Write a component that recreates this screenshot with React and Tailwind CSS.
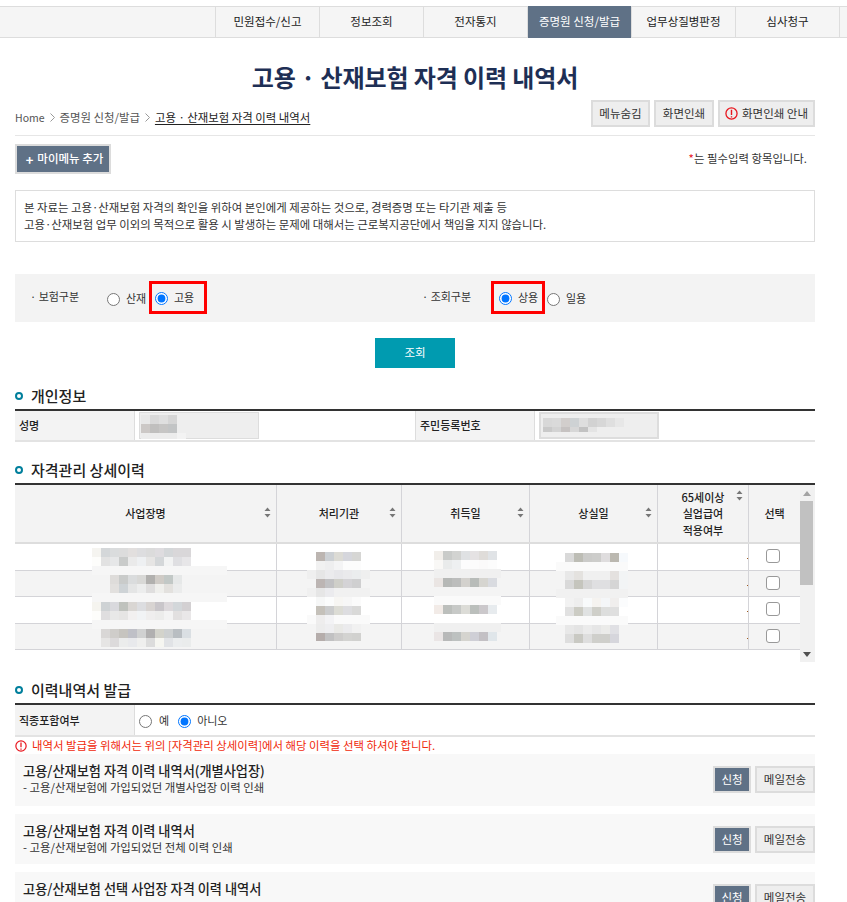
import React from "react";

const FONT = "[font-family:'Noto_Sans_CJK_KR','Noto_Sans',sans-serif]";
const nav = ["민원접수/신고", "정보조회", "전자통지", "증명원 신청/발급", "업무상질병판정", "심사청구"];

const Sort = () => (
  <svg width="7" height="11" viewBox="0 0 7 11" className="block">
    <path d="M3.5 0.5 L6.5 4 H0.5 Z M3.5 10.5 L0.5 7 H6.5 Z" fill="#777" />
  </svg>
);

const Radio = ({ checked, name }) => (
  <input type="radio" name={name} defaultChecked={checked} className="m-0 h-[13px] w-[13px] shrink-0 translate-y-px accent-[#0075ff]" />
);

const Bullet = ({ children, className }) => (
  <h2 className={`flex h-[14px] items-center gap-2 text-[15px] font-medium text-[#222] ${className}`}>
    <span className="h-2 w-2 rounded-full border-2 border-[#007f9c]" />
    {children}
  </h2>
);

const Warn = ({ size = 13 }) => (
  <svg width={size} height={size} viewBox="0 0 14 14" className="shrink-0">
    <circle cx="7" cy="7" r="6" fill="none" stroke="#e8171f" strokeWidth="1.4" />
    <path d="M7 3 V8.5 M7 10 V11.3" stroke="#e8171f" strokeWidth="1.5" />
  </svg>
);

const GrayBtn = ({ className, children }) => (
  <button className={`flex h-[27px] items-center justify-center gap-1 border-2 border-[#dcdcdc] bg-[#eeeeee] text-[11.5px] whitespace-nowrap text-[#333] ${className}`}>
    {children}
  </button>
);

const SlateBtn = ({ className, children }) => (
  <button className={`flex items-center justify-center border-2 border-[#dcdcdc] bg-[#5f7186] text-[11.5px] whitespace-nowrap text-white ${className}`}>
    {children}
  </button>
);

const heads = [
  ["사업장명", "w-[262px]"],
  ["처리기관", "w-[125px]"],
  ["취득일", "w-[128px]"],
  ["상실일", "w-[128px]"],
];

const rows = [
  "h-[27px] bg-white",
  "h-[26px] bg-[#f4f4f4]",
  "h-[27px] bg-white",
  "h-[26px] bg-[#f4f4f4]",
];

const M = (x, y, h, colors, w = 9) => ({ x, y, h, w, colors });
const c1 = "#d4d7d9", c2 = "#e2e2e2", c3 = "#c9cbca", c6 = "#f6f6f6";
const blurs = [
  M(92, 63, 9, ["#f5f4f0", c1, "#dadcdd", "#dcdcdc", "#e2dfde", "#dddddf", "#dbdbdb", "#dedcdf", c1, "#d9d7d9", "#d9d7d9"]),
  M(92, 72, 9, ["#fdfdfb", c2, "#e6e7e8", c3, "#eaeaea", "#eef0f2", "#e6e5e4", c1, "#f2f3f3", "#dfdfe2", "#e7e6e8"]),
  M(92, 81, 9, [c6, c6, c6, c6, c6, c6, c6, c6, c6, c6, c6, c6, c6, c6, c6]),
  M(110, 90, 9, ["#dedcda", c3, "#dadcdd", "#d8d8d6", "#b1b0ae", "#cfcbc6", "#c2c8c6", "#e6e8e8"]),
  M(110, 99, 9, ["#e2e0de", "#ced3d6", "#e4e5e5", "#eceded", "#dfdede", "#efefec", "#e3e1de", "#ebecec"]),
  M(92, 108, 9, [c6, c6, c6, c6, c6, c6, c6, c6, c6, c6, c6, c6, c6, c6, c6]),
  M(92, 117, 9, ["#f5f4ef", "#ced2d4", "#d9d9dd", "#bfc2bd", "#d9d6d3", "#dcdde0", "#d8d4d2", "#c9c6ca", "#ddd9dc", "#d3d7da", "#d3d0d2"]),
  M(92, 126, 9, ["#fdfdfb", "#dfdedf", "#e8e8e8", "#e6e5e4", "#f2f0f0", "#f1f3f5", "#efeeee", "#ececeb", "#f3f3f3", "#e2e0e0", "#e9e7e8"]),
  M(92, 135, 9, [c6, c6, c6, c6, c6, c6, c6, c6, c6, c6, c6, c6, c6, c6, c6]),
  M(101, 144, 9, ["#d9d7d6", "#cfcdca", "#c6c4bf", "#bfc0c7", "#d0d1d1", "#b1b0b0", "#d3d3cb", "#cdd0d1", "#b9bec2", "#dadfe3"]),
  M(101, 153, 9, ["#e6e5e4", "#dcdadb", "#ebecec", "#e8e9ec", "#efefee", "#dcdcdc", "#f6f6f1", "#e1e3e6", "#ebedee", "#eaecec"]),

  M(316, 67, 9, ["#bcb5b1", "#ccd0d4", "#dcdbd5", "#d5d6dc", "#d6d6d4"]),
  M(316, 76, 9, ["#f1f1f1", "#eeeeef", "#f4f4f5", "#fcfcfc", "#fcfcfc"]),
  M(307, 85, 9, ["#efefef", "#e6e6e6", "#ebebed", "#e7e7ea", "#eaeaec", "#ebedee", "#efefef"]),
  M(316, 94, 9, ["#bcb5b3", "#c1c1c3", "#cfcfc9", "#d4d3d6", "#cfcfd0"]),
  M(307, 103, 9, ["#f0f0f0", "#e6e6e6", "#ebebee", "#f1f1f1", "#f1f1f1", "#f1f1f1", "#f1f1f1"]),
  M(316, 112, 9, ["#f6f7f7", "#fbfcfc", "#f7f6f3", "#f7f7f7", "#fbfbfb"]),
  M(316, 121, 9, ["#c5c1ba", "#cbcccd", "#dcdcd5", "#dddde0", "#d9d9d8"]),
  M(307, 130, 9, ["#fafafa", "#eeeded", "#f3f3f5", "#fafafa", "#fafafa", "#fafafa", "#fafafa"]),
  M(316, 139, 9, ["#ececec", "#eeeef0", "#e9e9e6", "#ebebed", "#f1f1f1"]),
  M(316, 148, 8, ["#b5adab", "#c1c1c2", "#cdcccb", "#d3d3d1", "#d1d1cf"]),

  M(434, 66, 9, ["#f1eeea", "#c9cbc9", "#d2d3d1", "#dfe1e3", "#e5e2e3", "#dfdcd9", "#e0e3e6"]),
  M(434, 75, 9, ["#f9f8f6", "#e9ebeb", "#eef0f1", "#fcfcfd", "#fcfcfc", "#fbfafa", "#fcfcfc"]),
  M(434, 84, 9, ["#f0f0f0", "#f0f0f0", "#f0f0f0", "#f0f0f0", "#f0f0f0", "#f0f0f0", "#f0f0f0", "#f0f0f0"], 8.4),
  M(434, 93, 9, ["#eae5e3", "#b6b8b6", "#bcbdbc", "#d3d1cd", "#b8bcb9", "#d6d5d0", "#d9dbe0"]),
  M(434, 111, 9, ["#fafafa", "#fafafa", "#fafafa", "#fafafa", "#fafafa", "#fafafa", "#fafafa", "#fafafa"], 8.4),
  M(434, 120, 9, ["#f2ebe7", "#bcbfbc", "#c7c9c7", "#dcdcd7", "#bbbfbc", "#cbc8cb", "#e7ebee"]),
  M(434, 138, 9, ["#f0f0f0", "#f0f0f0", "#f0f0f0", "#f0f0f0", "#f0f0f0", "#f0f0f0", "#f0f0f0", "#f0f0f0"], 8.4),
  M(434, 147, 9, ["#eae5e5", "#b8b9b9", "#bdc1c0", "#d5d4cf", "#cfcfd6", "#c3c0c4", "#e0e6ea"]),

  M(565, 68, 9, ["#d9d9d9", "#bdbdb5", "#cbcbc9", "#cdcdcb", "#dfddde", "#bbb8b0", "#f6f9fc"]),
  M(556, 77, 9, ["#fafafa", "#fafafa", "#fafafa", "#fafafa", "#fafafa", "#fafafa", "#fafafa", "#fafafa"]),
  M(565, 86, 9, ["#e8e8e8", "#e4e2df", "#f0f0f0", "#f0f0f0", "#f0f0f0", "#e4e1df", "#f2f4f5"]),
  M(565, 95, 9, ["#d9d9d9", "#c5c5bd", "#d6d6d6", "#dfdfe1", "#dfdfe1", "#d5d5d5", "#f2f4f5"]),
  M(556, 104, 9, ["#f1f1f1", "#f1f1f1", "#f1f1f1", "#f1f1f1", "#f1f1f1", "#f1f1f1", "#f1f1f1", "#f1f1f1"]),
  M(565, 113, 9, ["#f2f2f2", "#eeeeee", "#f8fafb", "#f5f3f0", "#f4f6f8", "#f0eeed", "#fbfcfd"]),
  M(565, 122, 9, ["#e1e1e1", "#ccccc4", "#e0e2e2", "#cfcfc9", "#dddedd", "#dfdfdf", "#ffffff"]),
  M(556, 131, 9, ["#fafafa", "#fafafa", "#fafafa", "#fafafa", "#fafafa", "#fafafa", "#fafafa", "#fafafa"]),
  M(565, 140, 9, ["#e8e8e8", "#e4e4e4", "#ebebeb", "#e6e6e6", "#ebebe9", "#e0e0e4"]),
  M(565, 149, 9, ["#dedede", "#c9c9c3", "#dedede", "#cfcfcb", "#cfcfcb", "#d6d6dc"]),
];

const nameBlur = [
  M(0, 0, 9, ["#e8e8e8", "#d9d9d9", "#dfdfdf", "#d5d5d5"]),
  M(0, 9, 9, ["#ccc8c6", "#c0bfbe", "#c6c5c4", "#c2c4c5"]),
  M(0, 18, 6, ["#ececec", "#ececec", "#ececec", "#ececec", "#f3f3f3"]),
];
const rrnBlur = [
  M(0, 0, 9, ["#d8d8d8", "#dadada", "#d2cecc", "#ced2d4", "#dedede", "#d2d2d2", "#d7d7d7", "#dfdfdf", "#e7e7e7"]),
  M(0, 9, 5, ["#c9c9c9", "#d3d3d3", "#c6c2c1", "#d7d7d7", "#c2c2c2", "#e4e4e4"]),
];

const Mosaic = ({ blocks, className }) => (
  <div aria-hidden className={`pointer-events-none absolute ${className}`}>
    {blocks.map((b, i) => (
      <div key={i} className="absolute flex" style={{ left: b.x, top: b.y }}>
        {b.colors.map((c, j) => (
          <span key={j} className="block" style={{ width: b.w, height: b.h, background: c }} />
        ))}
      </div>
    ))}
  </div>
);

const Card = ({ title, sub, className }) => (
  <div className={`flex justify-between bg-[#f8f8f8] pl-2 ${className}`}>
    <div className="pt-[8px]">
      <p className="text-[13.2px] leading-[18px] font-medium text-[#222]">{title}</p>
      {sub && <p className="-mt-px text-[11.4px] leading-[16px] text-[#333]">{sub}</p>}
    </div>
    <div className="flex gap-1 pt-[12px]">
      <SlateBtn className="h-[27px] w-[38px]">신청</SlateBtn>
      <GrayBtn className="w-[60px]">메일전송</GrayBtn>
    </div>
  </div>
);

export default function App() {
  return (
    <div className={`h-[902px] w-[847px] overflow-hidden bg-white text-[#333] ${FONT}`}>
      <nav className="mt-[6px] flex h-[32px] border-y border-[#dddddd] bg-[#f5f5f5] pl-[215px]">
        {nav.map((n, i) => (
          <a
            key={n}
            className={`flex w-[104px] items-center justify-center border-l border-[#dddddd] text-[11.5px] ${
              i === 3 ? "-mt-px -mb-px bg-[#5f7186] text-white" : "text-[#222]"
            }`}
          >
            {n}
          </a>
        ))}
        <span className="w-px bg-[#dddddd]" />
      </nav>

      <main className="w-[815px] pl-[15px]">
        <h1 className="mt-[23px] h-[32px] text-center text-[24px] leading-[32px] font-bold tracking-[-0.1px] text-[#1e2f55]">
          고용 · 산재보험 자격 이력 내역서
        </h1>

        <div className="mt-[7px] flex h-[36px] items-start justify-between border-b border-[#e6e6e6]">
          <div className="mt-[9px] flex items-center gap-[5px] text-[11.4px] text-[#555]">
            <span className="text-[10.5px]">Home</span>
            <svg width="5" height="9" viewBox="0 0 5 9"><path d="M0.5 0.5 L4.5 4.5 L0.5 8.5" fill="none" stroke="#999" /></svg>
            <span>증명원 신청/발급</span>
            <svg width="5" height="9" viewBox="0 0 5 9"><path d="M0.5 0.5 L4.5 4.5 L0.5 8.5" fill="none" stroke="#999" /></svg>
            <span className="text-[#222] underline underline-offset-2">고용 · 산재보험 자격 이력 내역서</span>
          </div>
          <div className="flex gap-1">
            <GrayBtn className="w-[59px]">메뉴숨김</GrayBtn>
            <GrayBtn className="w-[60px]">화면인쇄</GrayBtn>
            <GrayBtn className="w-[97px]"><Warn />화면인쇄 안내</GrayBtn>
          </div>
        </div>

        <div className="mt-[8px] flex h-[30px] items-center justify-between">
          <SlateBtn className="h-[30px] w-[96px] gap-1 pl-[3px] font-medium"><span className="text-[13px] leading-none font-bold">+</span>마이메뉴 추가</SlateBtn>
          <p className="mr-2 text-[11.4px] text-[#333]"><span className="text-[#e8171f]">*</span>는 필수입력 항목입니다.</p>
        </div>

        <div className="mt-[16px] h-[52px] border border-[#dddddd] px-2 py-2 text-[11.4px] leading-[17px] text-[#333]">
          <p>본 자료는 고용·산재보험 자격의 확인을 위하여 본인에게 제공하는 것으로, 경력증명 또는 타기관 제출 등</p>
          <p>고용·산재보험 업무 이외의 목적으로 활용 시 발생하는 문제에 대해서는 근로복지공단에서 책임을 지지 않습니다.</p>
        </div>

        <div className="mt-[32px] grid h-[48px] grid-cols-[392px_408px] bg-[#f3f3f3] text-[11px] text-[#333]">
          <div className="flex items-center pl-[15px]">
            <span className="w-[77px] -translate-y-[2px] whitespace-nowrap">· 보험구분</span>
            <Radio name="a" />
            <span className="ml-[6px] w-[20px] whitespace-nowrap">산재</span>
            <div className="-mt-px ml-[3px] flex h-[33px] w-[58px] items-center border-[3px] border-[#ff0000] pl-[3px]">
              <Radio name="a" checked />
              <span className="ml-[6px] whitespace-nowrap">고용</span>
            </div>
          </div>
          <div className="flex items-center pl-[15px]">
            <span className="w-[69px] -translate-y-[2px] whitespace-nowrap">· 조회구분</span>
            <div className="-mt-px flex h-[33px] w-[54px] items-center border-[3px] border-[#ff0000] pl-[5px]">
              <Radio name="b" checked />
              <span className="ml-[6px] whitespace-nowrap">상용</span>
            </div>
            <span className="ml-[2px] flex items-center">
              <Radio name="b" />
              <span className="ml-[6px] whitespace-nowrap">일용</span>
            </span>
          </div>
        </div>

        <div className="mt-[16px] flex justify-center">
          <button className="h-[30px] w-[80px] bg-[#009bb0] text-[11.5px] text-white">조회</button>
        </div>

        <Bullet className="mt-[21px]">개인정보</Bullet>
        <div className="mt-[6px] flex h-[33px] border-t-2 border-b-2 border-t-[#333] border-b-[#e3e3e3] text-[11px] font-medium text-[#222]">
          <div className="flex w-[120px] items-center border-r border-[#dddddd] bg-[#f3f3f3] pl-1">성명</div>
          <div className="flex w-[280px] items-center pl-[4px]">
            <div className="relative h-[27px] w-[120px] border border-[#dddddd] bg-[#eeeeee]">
              <Mosaic blocks={nameBlur} className="top-[2px] left-[1px]" />
            </div>
          </div>
          <div className="flex w-[120px] items-center border-x border-[#dddddd] bg-[#f3f3f3] pl-1">주민등록번호</div>
          <div className="flex items-center pl-[4px]">
            <div className="relative h-[27px] w-[120px] border-2 border-[#dddddd] bg-[#eeeeee]">
              <Mosaic blocks={rrnBlur} className="top-[4px] left-[2px]" />
            </div>
          </div>
        </div>

        <Bullet className="mt-[21px]">자격관리 상세이력</Bullet>
        <div className="relative mt-[6px] flex h-[179px] w-[800px] border-t-2 border-[#333]">
          <div className="w-[785px]">
            <div className="flex h-[59px] border-b-2 border-[#dddddd] bg-[#f3f3f3] text-[11px] font-medium text-[#222]">
              {heads.map(([h, w]) => (
                <div key={h} className={`relative flex items-center justify-center border-r border-[#d4d4d8] ${w}`}>
                  {h}
                  <span className="absolute top-[22px] right-[5px]"><Sort /></span>
                </div>
              ))}
              <div className="relative flex w-[91px] items-center justify-center border-r border-[#d4d4d8] text-center leading-[16.5px]">
                <span>65세이상<br />실업급여<br />적용여부</span>
                <span className="absolute top-[5px] right-[5px]"><Sort /></span>
              </div>
              <div className="flex w-[51px] items-center justify-center">선택</div>
            </div>
            {rows.map((r, i) => (
              <div key={i} className={`flex border-b border-[#d4d4d8] ${r}`}>
                {heads.map(([h, w]) => (
                  <div key={h} className={`border-r border-[#d4d4d8] ${w}`} />
                ))}
                <div className="flex w-[91px] items-center justify-end border-r border-[#d4d4d8]">
                  <span className="mt-[3px] h-px w-px bg-[#a05a1e]" />
                </div>
                <div className="flex w-[51px] items-center justify-center pr-[4px]">
                  <input type="checkbox" className="m-0 h-[14px] w-[14px] -translate-y-px appearance-none rounded-[3px] border border-[#999] bg-white" />
                </div>
              </div>
            ))}
          </div>
          <div className="flex w-[15px] flex-col bg-[#f1f1f1]">
            <div className="flex h-[16px] w-[13px] items-center justify-center">
              <svg width="8" height="5" viewBox="0 0 8 5"><path d="M4 0 L8 5 H0 Z" fill="#a3a3a3" /></svg>
            </div>
            <div className="h-[84px] w-[13px] bg-[#c1c1c1]" />
            <div className="flex-1" />
            <div className="flex h-[16px] w-[13px] items-center justify-center">
              <svg width="8" height="5" viewBox="0 0 8 5"><path d="M0 0 H8 L4 5 Z" fill="#505050" /></svg>
            </div>
          </div>
          <Mosaic blocks={blurs} className="top-0 -left-[15px]" />
        </div>

        <Bullet className="mt-[21px]">이력내역서 발급</Bullet>
        <div className="mt-[6px] flex h-[34px] border-t-2 border-b-2 border-t-[#333] border-b-[#e3e3e3] text-[11px]">
          <div className="flex w-[120px] items-center border-r border-[#dddddd] bg-[#f3f3f3] pl-1 font-medium text-[#222]">직종포함여부</div>
          <div className="flex items-center pl-[4px] text-[#333]">
            <Radio name="c" />
            <span className="ml-[7px]">예</span>
            <span className="ml-[9px] flex items-center">
              <Radio name="c" checked />
              <span className="ml-[6px]">아니오</span>
            </span>
          </div>
        </div>
        <p className="flex h-[17px] items-center gap-[5px] text-[11.4px] whitespace-nowrap text-[#f0280a]"><Warn size={12} />내역서 발급을 위해서는 위의 [자격관리 상세이력]에서 해당 이력을 선택 하셔야 합니다.</p>
        <Card className="h-[52px]" title="고용/산재보험 자격 이력 내역서(개별사업장)" sub="- 고용/산재보험에 가입되었던 개별사업장 이력 인쇄" />
        <Card className="mt-[8px] h-[50px]" title="고용/산재보험 자격 이력 내역서" sub="- 고용/산재보험에 가입되었던 전체 이력 인쇄" />
        <Card className="mt-[8px] h-[50px]" title="고용/산재보험 선택 사업장 자격 이력 내역서" />
      </main>
    </div>
  );
}
